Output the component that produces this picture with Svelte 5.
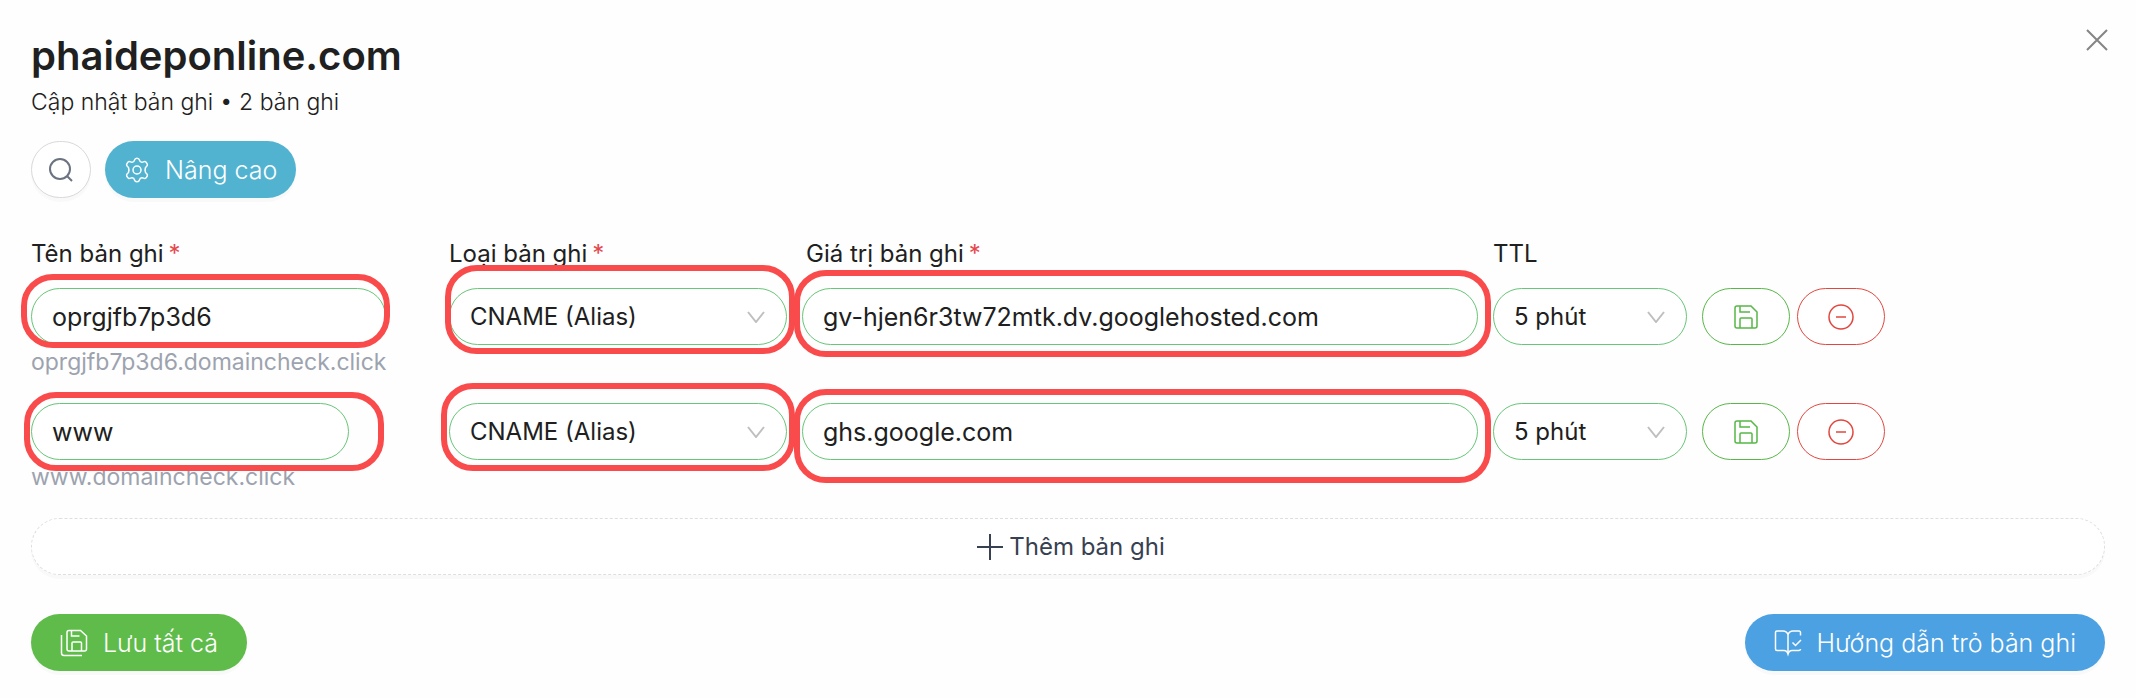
<script lang="ts">
    type Mark = { top: number; right: number; bottom: number; left: number };
    type DnsRecord = {
        name: string;
        type: string;
        value: string;
        ttl: string;
        marks: { name: Mark; type: Mark; value: Mark };
    };

    const domain = 'phaideponline.com';
    const zone = 'domaincheck.click';
    const types = ['CNAME (Alias)', 'A', 'AAAA', 'MX', 'TXT'];
    const ttls = ['5 phút', '10 phút', '30 phút', '1 giờ'];

    // marks: how far each highlight reaches past its field
    let records = $state<DnsRecord[]>([
        {
            name: 'oprgjfb7p3d6',
            type: 'CNAME (Alias)',
            value: 'gv-hjen6r3tw72mtk.dv.googlehosted.com',
            ttl: '5 phút',
            marks: {
                name: { top: 14, right: 4, bottom: 3, left: 10 },
                type: { top: 23, right: 8, bottom: 9, left: 4 },
                value: { top: 18, right: 13, bottom: 12, left: 8 },
            },
        },
        {
            name: 'www',
            type: 'CNAME (Alias)',
            value: 'ghs.google.com',
            ttl: '5 phút',
            marks: {
                name: { top: 11, right: 35, bottom: 11, left: 7 },
                type: { top: 20, right: 8, bottom: 11, left: 8 },
                value: { top: 14, right: 13, bottom: 23, left: 8 },
            },
        },
    ]);
    let count = $derived(records.length);

    function inset(m: Mark) {
        return `inset: ${-m.top}px ${-m.right}px ${-m.bottom}px ${-m.left}px`;
    }
</script>

{#snippet chevron()}
    <svg class="chevron" viewBox="0 0 18 12" width="18" height="12" aria-hidden="true">
        <path d="M1 1l8 10 8-10" />
    </svg>
{/snippet}

<main>
    <header>
        <div>
            <h1>{domain}</h1>
            <p class="subtitle">Cập nhật bản ghi • {count} bản ghi</p>
        </div>
        <button class="close" aria-label="Đóng">
            <svg viewBox="0 0 24 24" width="24" height="24">
                <path d="M2 2l20 20M22 2L2 22" />
            </svg>
        </button>
    </header>

    <div class="toolbar">
        <button class="search" aria-label="Tìm kiếm">
            <svg viewBox="0 0 26 26" width="26" height="26">
                <circle cx="12" cy="12" r="10" />
                <path d="M19 19l5 5" />
            </svg>
        </button>
        <button class="solid cyan">
            <svg viewBox="0 0 26 26" width="26" height="26">
                <path
                    d="M10.5 3.2c.3-1.3 1-2 2.5-2s2.2.7 2.5 2c.3 1.4 1.3 2.2 2.6 2.1 1.1-.1 1.8-.9 2.9-.8 1 .1 2.5 2.4 2.4 3.5-.1 1-1.3 1.5-1.9 2.6-.6 1.5-.6 3.3 0 4.8.6 1.1 1.8 1.6 1.9 2.6.1 1.1-1.4 3.4-2.4 3.5-1.1.1-1.8-.7-2.9-.8-1.3-.1-2.3.7-2.6 2.1-.3 1.3-1 2-2.5 2s-2.2-.7-2.5-2c-.3-1.4-1.3-2.2-2.6-2.1-1.1.1-1.8.9-2.9.8-1-.1-2.5-2.4-2.4-3.5.1-1 1.3-1.5 1.9-2.6.6-1.5.6-3.3 0-4.8C3.900 9.500 2.700 9 2.600 8c-.1-1.1 1.400-3.400 2.400-3.500 1.100-.1 1.800.7 2.900.8 1.300.1 2.300-.7 2.600-2.100z"
                />
                <circle cx="13" cy="13" r="4" />
            </svg>
            Nâng cao
        </button>
    </div>

    <div class="row labels">
        <label for="name-0">Tên bản ghi<sup>*</sup></label>
        <label for="type-0">Loại bản ghi<sup>*</sup></label>
        <label class="value-label" for="value-0">Giá trị bản ghi<sup>*</sup></label>
        <label for="ttl-0">TTL</label>
    </div>

    {#each records as record, i}
        <div class="row record">
            <div class="name">
                <div class="field">
                    <input id="name-{i}" aria-label="Tên bản ghi" size="1" bind:value={record.name} />
                    <span class="mark" style={inset(record.marks.name)}></span>
                </div>
                <p class="hint">{record.name}.{zone}</p>
            </div>
            <div class="field">
                <select id="type-{i}" aria-label="Loại bản ghi" bind:value={record.type}>
                    {#each types as type}
                        <option>{type}</option>
                    {/each}
                </select>
                {@render chevron()}
                <span class="mark" style={inset(record.marks.type)}></span>
            </div>
            <div class="field">
                <input id="value-{i}" aria-label="Giá trị bản ghi" bind:value={record.value} />
                <span class="mark" style={inset(record.marks.value)}></span>
            </div>
            <div class="field">
                <select id="ttl-{i}" aria-label="TTL" bind:value={record.ttl}>
                    {#each ttls as ttl}
                        <option>{ttl}</option>
                    {/each}
                </select>
                {@render chevron()}
            </div>
            <div class="actions">
                <button class="outline green" aria-label="Lưu">
                    <svg viewBox="0 0 24 24" width="24" height="24">
                        <path d="M3 1h14l6 6v14a2 2 0 0 1-2 2H3a2 2 0 0 1-2-2V3a2 2 0 0 1 2-2z" />
                        <path d="M6 1v6h10M6 23V14a1 1 0 0 1 1-1h10a1 1 0 0 1 1 1v9" />
                    </svg>
                </button>
                <button class="outline red" aria-label="Xóa">
                    <svg viewBox="0 0 26 26" width="26" height="26">
                        <circle cx="13" cy="13" r="12" />
                        <path d="M8 13h10" />
                    </svg>
                </button>
            </div>
        </div>
    {/each}

    <button class="add">
        <svg viewBox="0 0 26 26" width="26" height="26">
            <path d="M13 0v26M0 13h26" />
        </svg>
        Thêm bản ghi
    </button>

    <footer>
        <button class="solid save-all">
            <svg viewBox="0 0 28 28" width="28" height="28">
                <path d="M9 1.500h11.500l6 5.500v13a2 2 0 0 1-2 2H9a2 2 0 0 1-2-2V3.500a2 2 0 0 1 2-2z" />
                <path d="M11.500 1.500v5.500h8M12 22v-8a1 1 0 0 1 1-1h7.500a1 1 0 0 1 1 1v8" />
                <path d="M1.500 6v18a2.500 2.500 0 0 0 2.500 2.500h18" />
            </svg>
            Lưu tất cả
        </button>
        <button class="solid guide">
            <svg viewBox="0 0 28 28" width="28" height="28">
                <path d="M14 5.500C13 3 11.500 2 9 2H3a1.500 1.500 0 0 0-1.500 1.500v16.500A1.500 1.500 0 0 0 3 21.500h7c2.200 0 3.300 1 4 3.500.7-2.500 1.800-3.500 4-3.500h7a1.500 1.500 0 0 0 1.500-1.500" />
                <path d="M14 25V5.500C15 3 16.500 2 19 2h6a1.500 1.500 0 0 1 1.500 1.500v3" />
                <path d="M18.500 13.500l3 3 5.500-5.500" />
            </svg>
            Hướng dẫn trỏ bản ghi
        </button>
    </footer>
</main>

<style>
    :global(body) {
        background: #fefefe;
    }

    main,
    button,
    input,
    select {
        font-family: Inter, 'Noto Sans', sans-serif;
        font-size: 24px;
        color: #202020;
    }

    main {
        padding: 32px 31px 27px;
    }

    h1,
    p {
        margin: 0;
    }

    svg {
        flex: none;
        fill: none;
        stroke: currentColor;
        stroke-width: 2;
    }

    button {
        box-sizing: border-box;
        display: flex;
        align-items: center;
        justify-content: center;
        height: 57px;
        padding: 0;
        border: 0;
        border-radius: 29px;
        background: #fff;
        cursor: pointer;
    }

    header {
        display: flex;
        justify-content: space-between;
        align-items: flex-start;
    }

    h1 {
        font-size: 40px;
        font-weight: 600;
        line-height: 48px;
    }

    .subtitle {
        margin-top: 6px;
        font-size: 23px;
        font-weight: 300;
        line-height: 32px;
    }

    .close {
        height: 24px;
        margin-top: -4px;
        margin-right: -4px;
        background: none;
        color: #858585;
    }

    .toolbar {
        display: flex;
        gap: 14px;
        margin-top: 23px;
    }

    .search {
        width: 60px;
        border: 1px solid #d9d9d9;
        box-shadow: 0 4px 0 rgba(0, 0, 0, 0.02);
        color: #6b7280;
    }

    .solid {
        gap: 15px;
        padding: 0 19px;
        box-shadow: 0 4px 0 rgba(0, 0, 0, 0.02);
        color: #fff;
        font-size: 25px;
        font-weight: 300;
    }

    .solid svg,
    .outline svg {
        stroke-width: 1.5;
    }

    .cyan {
        background: #52b3d1;
    }

    .row {
        display: grid;
        grid-template-columns: 418fr 353fr 691fr 209fr 403fr;
    }

    .labels {
        margin: 40px 0 18px;
        line-height: 32px;
    }

    .value-label {
        padding-left: 4px;
    }

    sup {
        margin-left: 5px;
        color: #e5484d;
        font-size: 24px;
        line-height: 0;
        vertical-align: baseline;
    }

    .record {
        align-items: start;
        height: 115px;
    }

    .name {
        width: fit-content;
        min-width: 318px;
    }

    .field {
        position: relative;
        display: grid;
        align-items: center;
        margin-right: 15px;
    }

    .name .field {
        margin-right: 0;
    }

    .field > input,
    .field > select,
    .chevron {
        grid-area: 1 / 1;
    }

    input,
    select {
        box-sizing: border-box;
        width: 100%;
        height: 57px;
        padding: 0 20px;
        border: 1px solid #67c677;
        border-radius: 29px;
        outline: none;
        background: #fff;
        appearance: none;
    }

    input {
        font-size: 25px;
    }

    .chevron {
        justify-self: end;
        margin-right: 22px;
        stroke: #bfbfbf;
        pointer-events: none;
    }

    .mark {
        position: absolute;
        z-index: 1;
        border: 6px solid #f94b4b;
        border-radius: 32px;
        pointer-events: none;
    }

    .hint {
        color: #9ca3af;
        font-size: 23px;
        line-height: 34px;
    }

    .actions {
        display: flex;
        gap: 7px;
    }

    .outline {
        width: 88px;
        border: 1px solid currentColor;
    }

    .green {
        color: #57b847;
    }

    .red {
        color: #e2473f;
    }

    .add {
        gap: 6px;
        width: 100%;
        padding-left: 6px;
        border: 1px dashed #dedede;
        box-shadow: 0 4px 0 rgba(0, 0, 0, 0.02);
        color: #374151;
    }

    footer {
        display: flex;
        justify-content: space-between;
        margin-top: 39px;
    }

    .save-all {
        padding: 0 29px;
        background: #5fbc4a;
    }

    .guide {
        padding: 0 29px;
        background: #4ba1e2;
    }
</style>
